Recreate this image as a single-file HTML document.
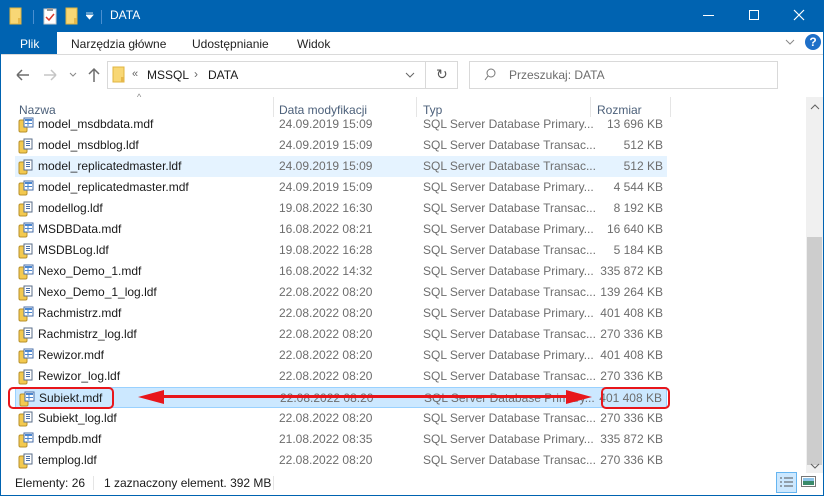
<!DOCTYPE html>
<html><head><meta charset="utf-8"><style>
*{margin:0;padding:0;box-sizing:border-box}
body{width:824px;height:496px;position:relative;overflow:hidden;background:#fff;font-family:"Liberation Sans",sans-serif;font-size:12px;color:#1a1a1a}
.a{position:absolute}
.title{left:0;top:0;width:824px;height:32px;background:#0063b1;color:#fff}
.tabs{left:0;top:32px;width:824px;height:23px;background:#fff;border-bottom:1px solid #dadada}
.tab{position:absolute;top:5px;font-size:12px;color:#222}
.border{border-left:1px solid #0063b1;border-right:1px solid #0063b1;border-bottom:1px solid #0063b1;left:0;top:32px;width:824px;height:464px}
.hdr{top:97px;height:20px;color:#4c607a;font-size:12px}
.sep{top:97px;width:1px;height:20px;background:#e5e5e5}
.list{left:0;top:117px;width:806px;height:356px;overflow:hidden}
.row{position:absolute;left:15px;width:652px;height:21px}
.row span{position:absolute;top:3px;white-space:nowrap}
.n{left:23px;color:#1a1a1a}
.d{left:264px;color:#6d6d6d}
.t{left:408px;color:#6d6d6d}
.s{right:4px;color:#6d6d6d;text-align:right}
.ic{position:absolute;left:3px;top:3px}
</style></head><body>
<div class="a title">
 <svg class="a" style="left:9px;top:7px" width="14" height="18"><rect x="1" y="1" width="11" height="16" fill="#f8d775" stroke="#e0b440"/><rect x="9" y="11" width="3" height="6" fill="#e6b84a"/></svg>
 <div class="a" style="left:33px;top:10px;width:1px;height:14px;background:#4a8fd0"></div>
 <svg class="a" style="left:43px;top:7px" width="14" height="18"><rect x="1" y="2" width="12" height="15" fill="#fff" stroke="#ccc"/><rect x="4" y="1" width="6" height="3" fill="#999"/><path d="M3 10l3 3 5-6" stroke="#d9382b" stroke-width="1.5" fill="none"/></svg>
 <svg class="a" style="left:65px;top:7px" width="14" height="18"><rect x="1" y="1" width="11" height="16" fill="#f8d775" stroke="#e0b440"/><rect x="9" y="11" width="3" height="6" fill="#e6b84a"/></svg>
 <svg class="a" style="left:86px;top:12px" width="8" height="8"><path d="M0 1h7M0 3h7l-3.5 4z" fill="#fff" stroke="#fff" stroke-width=".8"/></svg>
 <div class="a" style="left:101px;top:10px;width:1px;height:14px;background:#4a8fd0"></div>
 <div class="a" style="left:110px;top:8px;font-size:12px">DATA</div>
 <div class="a" style="left:703px;top:15px;width:11px;height:1px;background:#fff"></div>
 <div class="a" style="left:749px;top:10px;width:10px;height:10px;border:1px solid #fff"></div>
 <svg class="a" style="left:793px;top:9px" width="12" height="12"><path d="M1 1L11 11M11 1L1 11" stroke="#fff" stroke-width="1.2"/></svg>
</div>
<div class="a tabs">
 <div class="a" style="left:0;top:0;width:57px;height:22px;background:#0063b1;color:#fff;padding:5px 0 0 20px">Plik</div>
 <div class="tab" style="left:71px">Narzędzia główne</div>
 <div class="tab" style="left:192px">Udostępnianie</div>
 <div class="tab" style="left:297px">Widok</div>
 <svg class="a" style="left:785px;top:7px" width="10" height="6"><path d="M1 1l4 4 4-4" stroke="#888" fill="none"/></svg>
 <div class="a" style="left:805px;top:2px;width:16px;height:16px;border-radius:50%;background:#1e6fc8;color:#fff;font-weight:bold;font-size:12px;text-align:center;line-height:16px">?</div>
</div>
<div class="a border"></div>
<!-- nav -->
<svg class="a" style="left:14px;top:66px" width="70" height="18"><path d="M3 9h12M3 9l5-5M3 9l5 5" stroke="#6d6d6d" stroke-width="1.5" fill="none"/><path d="M30 9h12M42 9l-5-5M42 9l-5 5" stroke="#c5c5c5" stroke-width="1.5" fill="none"/><path d="M56 7l3 3 3-3" stroke="#888" fill="none"/></svg>
<svg class="a" style="left:86px;top:66px" width="16" height="18"><path d="M8 16V3M3 8l5-5 5 5" stroke="#6d6d6d" stroke-width="1.5" fill="none"/></svg>
<div class="a" style="left:107px;top:61px;width:319px;height:28px;border:1px solid #d9d9d9"></div>
<svg class="a" style="left:112px;top:66px" width="14" height="18"><rect x="1" y="1" width="11" height="15" fill="#f8d775" stroke="#e0b440"/><rect x="9" y="11" width="3" height="5" fill="#e6b84a"/></svg>
<div class="a" style="left:132px;top:68px;color:#666;font-size:11px">«</div>
<div class="a" style="left:147px;top:68px">MSSQL</div>
<div class="a" style="left:194px;top:67px;color:#666">›</div>
<div class="a" style="left:208px;top:68px">DATA</div>
<svg class="a" style="left:405px;top:72px" width="10" height="6"><path d="M1 1l4 4 4-4" stroke="#666" fill="none"/></svg>
<div class="a" style="left:425px;top:61px;width:33px;height:28px;border:1px solid #d9d9d9"></div>
<div class="a" style="left:436px;top:66px;color:#555;font-size:14px">↻</div>
<div class="a" style="left:469px;top:61px;width:309px;height:28px;border:1px solid #d9d9d9"></div>
<svg class="a" style="left:484px;top:68px" width="12" height="14"><circle cx="7" cy="5" r="4" stroke="#777" fill="none"/><path d="M4 8l-3 4" stroke="#777"/></svg>
<div class="a" style="left:509px;top:68px;color:#6d6d6d">Przeszukaj: DATA</div>
<!-- headers -->
<div class="a" style="left:137px;top:92px;color:#888;font-size:9px">^</div>
<div class="a hdr" style="left:19px;padding-top:6px">Nazwa</div>
<div class="a sep" style="left:273px"></div>
<div class="a hdr" style="left:279px;padding-top:6px">Data modyfikacji</div>
<div class="a sep" style="left:416px"></div>
<div class="a hdr" style="left:423px;padding-top:6px">Typ</div>
<div class="a sep" style="left:590px"></div>
<div class="a hdr" style="left:597px;padding-top:6px">Rozmiar</div>
<div class="a sep" style="left:670px"></div>
<!-- scrollbar -->
<div class="a" style="left:806px;top:97px;width:17px;height:376px;background:#f0f0f0"></div>
<div class="a" style="left:807px;top:237px;width:15px;height:228px;background:#cdcdcd"></div>
<svg class="a" style="left:810px;top:104px" width="10" height="6"><path d="M1 5l4-4 4 4" stroke="#606060" fill="none"/></svg>
<svg class="a" style="left:810px;top:463px" width="10" height="6"><path d="M1 1l4 4 4-4" stroke="#606060" fill="none"/></svg>
<div class="a list">
<svg width="0" height="0" style="position:absolute"><defs>
<g id="L"><rect x="1" y="3" width="8" height="12" rx="1.5" fill="#f3c94f" stroke="#b8912b"/><rect x="6" y="1" width="8" height="10" fill="#fff" stroke="#5a6e8a"/><path d="M8 3.5h4M8 5.5h4M8 7.5h4" stroke="#4a6fa8"/></g>
<g id="M"><rect x="1" y="3" width="8" height="12" rx="1.5" fill="#f3c94f" stroke="#b8912b"/><rect x="6" y="1" width="9" height="9" fill="#fff" stroke="#4a6fa8"/><rect x="7" y="2" width="7" height="2" fill="#4a86d0"/><path d="M10 4v5M7 6.5h7" stroke="#4a86d0"/></g>
</defs></svg>
<div class="row" style="top:-3px"><svg class="ic" width="16" height="16"><use href="#M"/></svg><span class="n">model_msdbdata.mdf</span><span class="d">24.09.2019 15:09</span><span class="t">SQL Server Database Primary...</span><span class="s">13 696 KB</span></div>
<div class="row" style="top:18px"><svg class="ic" width="16" height="16"><use href="#L"/></svg><span class="n">model_msdblog.ldf</span><span class="d">24.09.2019 15:09</span><span class="t">SQL Server Database Transac...</span><span class="s">512 KB</span></div>
<div class="row" style="top:39px;background:#e5f3ff"><svg class="ic" width="16" height="16"><use href="#L"/></svg><span class="n">model_replicatedmaster.ldf</span><span class="d">24.09.2019 15:09</span><span class="t">SQL Server Database Transac...</span><span class="s">512 KB</span></div>
<div class="row" style="top:60px"><svg class="ic" width="16" height="16"><use href="#M"/></svg><span class="n">model_replicatedmaster.mdf</span><span class="d">24.09.2019 15:09</span><span class="t">SQL Server Database Primary...</span><span class="s">4 544 KB</span></div>
<div class="row" style="top:81px"><svg class="ic" width="16" height="16"><use href="#L"/></svg><span class="n">modellog.ldf</span><span class="d">19.08.2022 16:30</span><span class="t">SQL Server Database Transac...</span><span class="s">8 192 KB</span></div>
<div class="row" style="top:102px"><svg class="ic" width="16" height="16"><use href="#M"/></svg><span class="n">MSDBData.mdf</span><span class="d">16.08.2022 08:21</span><span class="t">SQL Server Database Primary...</span><span class="s">16 640 KB</span></div>
<div class="row" style="top:123px"><svg class="ic" width="16" height="16"><use href="#L"/></svg><span class="n">MSDBLog.ldf</span><span class="d">19.08.2022 16:28</span><span class="t">SQL Server Database Transac...</span><span class="s">5 184 KB</span></div>
<div class="row" style="top:144px"><svg class="ic" width="16" height="16"><use href="#M"/></svg><span class="n">Nexo_Demo_1.mdf</span><span class="d">16.08.2022 14:32</span><span class="t">SQL Server Database Primary...</span><span class="s">335 872 KB</span></div>
<div class="row" style="top:165px"><svg class="ic" width="16" height="16"><use href="#L"/></svg><span class="n">Nexo_Demo_1_log.ldf</span><span class="d">22.08.2022 08:20</span><span class="t">SQL Server Database Transac...</span><span class="s">139 264 KB</span></div>
<div class="row" style="top:186px"><svg class="ic" width="16" height="16"><use href="#M"/></svg><span class="n">Rachmistrz.mdf</span><span class="d">22.08.2022 08:20</span><span class="t">SQL Server Database Primary...</span><span class="s">401 408 KB</span></div>
<div class="row" style="top:207px"><svg class="ic" width="16" height="16"><use href="#L"/></svg><span class="n">Rachmistrz_log.ldf</span><span class="d">22.08.2022 08:20</span><span class="t">SQL Server Database Transac...</span><span class="s">270 336 KB</span></div>
<div class="row" style="top:228px"><svg class="ic" width="16" height="16"><use href="#M"/></svg><span class="n">Rewizor.mdf</span><span class="d">22.08.2022 08:20</span><span class="t">SQL Server Database Primary...</span><span class="s">401 408 KB</span></div>
<div class="row" style="top:249px"><svg class="ic" width="16" height="16"><use href="#L"/></svg><span class="n">Rewizor_log.ldf</span><span class="d">22.08.2022 08:20</span><span class="t">SQL Server Database Transac...</span><span class="s">270 336 KB</span></div>
<div class="row" style="top:270px;background:#cce8ff;border:1px solid #99d1ff"><svg class="ic" width="16" height="16"><use href="#M"/></svg><span class="n">Subiekt.mdf</span><span class="d">22.08.2022 08:20</span><span class="t">SQL Server Database Primary...</span><span class="s">401 408 KB</span></div>
<div class="row" style="top:291px"><svg class="ic" width="16" height="16"><use href="#L"/></svg><span class="n">Subiekt_log.ldf</span><span class="d">22.08.2022 08:20</span><span class="t">SQL Server Database Transac...</span><span class="s">270 336 KB</span></div>
<div class="row" style="top:312px"><svg class="ic" width="16" height="16"><use href="#M"/></svg><span class="n">tempdb.mdf</span><span class="d">21.08.2022 08:35</span><span class="t">SQL Server Database Primary...</span><span class="s">335 872 KB</span></div>
<div class="row" style="top:333px"><svg class="ic" width="16" height="16"><use href="#L"/></svg><span class="n">templog.ldf</span><span class="d">22.08.2022 08:20</span><span class="t">SQL Server Database Transac...</span><span class="s">270 336 KB</span></div>
</div>
<!-- annotations -->
<div class="a" style="left:8px;top:387px;width:106px;height:22px;border:2px solid #e8161b;border-radius:5px"></div>
<div class="a" style="left:601px;top:387px;width:69px;height:22px;border:2px solid #e8161b;border-radius:5px"></div>
<svg class="a" style="left:130px;top:386px" width="470" height="22"><path d="M30 10.5h410" stroke="#e8161b" stroke-width="3"/><path d="M8 11L34 4v14z M462 11L436 4v14z" fill="#e8161b"/></svg>
<!-- status -->
<div class="a" style="left:15px;top:476px;color:#1a1a1a">Elementy: 26</div>
<div class="a" style="left:93px;top:476px;width:1px;height:14px;background:#e5e5e5"></div>
<div class="a" style="left:104px;top:476px">1 zaznaczony element. 392 MB</div>
<div class="a" style="left:273px;top:476px;width:1px;height:14px;background:#e5e5e5"></div>
<div class="a" style="left:776px;top:472px;width:21px;height:21px;background:#cce8ff;border:1px solid #66b5f0"></div>
<svg class="a" style="left:779px;top:476px" width="16" height="14"><path d="M1 2h2M5 2h9M1 6h2M5 6h9M1 10h2M5 10h9" stroke="#555"/></svg>
<svg class="a" style="left:801px;top:476px" width="16" height="12"><rect x=".5" y=".5" width="14" height="10" fill="#fff" stroke="#777"/><rect x="2" y="2" width="11" height="7" fill="#3a8a6a"/><rect x="2" y="2" width="11" height="3" fill="#8ec3e8"/></svg>
</body></html>
